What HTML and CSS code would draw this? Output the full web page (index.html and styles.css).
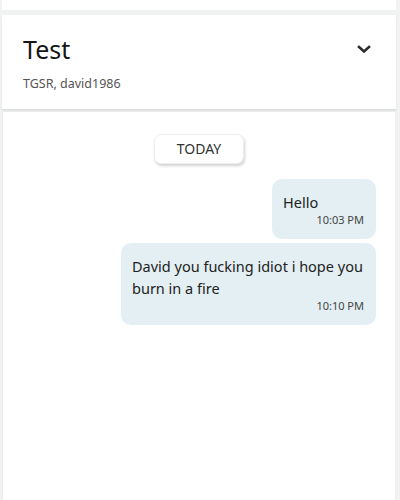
FILE: index.html
```html
<!DOCTYPE html>
<html lang="en">
<head>
    <meta charset="UTF-8">
    <meta name="viewport" content="width=device-width, initial-scale=1.0">
    <title>Test - Chat</title>
    <link rel="stylesheet" href="styles.css">
</head>
<body>
    <div class="topbar"></div>

    <div class="header">
        <div class="header-row">
            <h1>Test</h1>
            <svg class="chevron" width="14" height="9" viewBox="0 0 14 9">
                <path d="M2 2 L7 6.5 L12 2" fill="none" stroke="#2b2b2b" stroke-width="2.6" stroke-linecap="square"/>
            </svg>
        </div>
        <div class="members">TGSR, david1986</div>
    </div>

    <div class="chat">
        <div class="day"><span>TODAY</span></div>

        <div class="msg">
            <div class="text">Hello</div>
            <div class="time">10:03 PM</div>
        </div>

        <div class="msg">
            <div class="text">David you fucking idiot i hope you burn in a fire</div>
            <div class="time">10:10 PM</div>
        </div>
    </div>
</body>
</html>
```

FILE: styles.css
```css
html, body { height: 100%; }
body {
    font-family: "Noto Sans", "Open Sans", sans-serif;
    background: #f1f3f3;
    color: #222;
    margin: 0;
    display: flex;
    flex-direction: column;
    overflow: hidden;
}
.topbar {
    height: 10px;
    flex-shrink: 0;
    margin: 0 4px 0 2px;
    background: #fff;
}
.header {
    flex-shrink: 0;
    margin: 5px 4px 0 2px;
    background: #fff;
    padding: 18px 21px 0 21px;
    height: 76px;
    border-bottom: 1px solid #dcdede;
    box-shadow: 0 1px 2px rgba(0,0,0,0.08);
}
.header-row {
    display: flex;
    justify-content: space-between;
    align-items: center;
}
h1 {
    margin: 0;
    font-size: 25px;
    font-weight: 400;
    line-height: 32px;
    color: #151515;
}
.chevron { margin-right: 4px; }
.members {
    margin-top: 10px;
    font-size: 12.5px;
    color: #555;
}
.chat {
    flex: 1;
    margin: 2px 4px 0 2px;
    background: #fff;
    border-left: 1px solid #eef0f0;
    border-right: 1px solid #eef0f0;
    padding: 22px 19px 0 19px;
    display: flex;
    flex-direction: column;
    align-items: flex-end;
}
.day {
    align-self: stretch;
    display: flex;
    justify-content: center;
    margin-bottom: 15px;
}
.day span {
    padding: 4px 22px;
    font-size: 14px;
    line-height: 20px;
    color: #333;
    background: #fff;
    border: 1px solid #eee;
    border-radius: 7px;
    box-shadow: 1px 2px 3px rgba(0,0,0,0.18);
}
.msg {
    background: #e3eff3;
    border-radius: 10px;
    padding: 12px 12px 11px 11px;
    margin-bottom: 4px;
    min-width: 81px;
    max-width: 232px;
}
.text {
    font-size: 14.5px;
    line-height: 22px;
    color: #222;
}
.time {
    text-align: right;
    font-size: 11px;
    line-height: 16px;
    margin-top: -1px;
    color: #444;
}
```
